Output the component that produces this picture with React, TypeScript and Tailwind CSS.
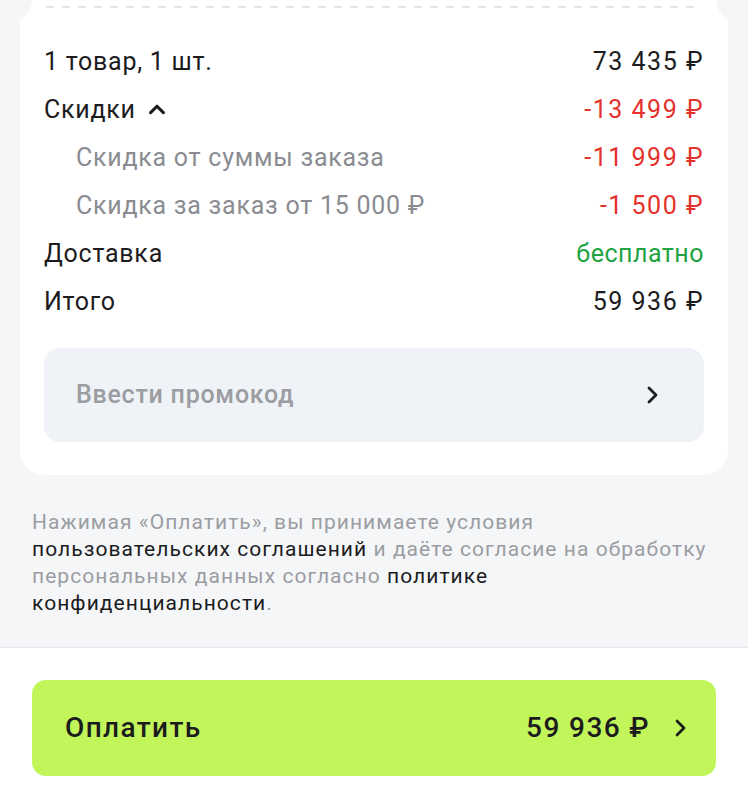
import React from "react";

const FONT = "font-['Roboto','Noto_Sans',sans-serif]";

function ChevronRight({ className = "" }: { className?: string }) {
  return (
    <svg viewBox="0 0 24 24" className={className} fill="none" stroke="currentColor" strokeWidth={2.8} strokeLinecap="round" strokeLinejoin="round">
      <path d="M9 5l7 7-7 7" />
    </svg>
  );
}

function ChevronUp({ className = "" }: { className?: string }) {
  return (
    <svg viewBox="0 0 24 24" className={className} fill="none" stroke="currentColor" strokeWidth={3.4} strokeLinecap="round" strokeLinejoin="round">
      <path d="M5 16l7-7 7 7" />
    </svg>
  );
}

function Row({
  label,
  value,
  sub = false,
  valueClass = "text-[#1c1c1e]",
  children,
}: {
  label: string;
  value: string;
  sub?: boolean;
  valueClass?: string;
  children?: React.ReactNode;
}) {
  return (
    <div className={`flex h-12 items-center justify-between ${sub ? "pl-8" : ""}`}>
      <span className={`flex items-center gap-[10px] ${sub ? "text-[#8a8c91]" : "text-[#1c1c1e]"}`}>
        {label}
        {children}
      </span>
      <span className={`tracking-[0.06em] ${valueClass}`}>{value}</span>
    </div>
  );
}

export default function App() {
  return (
    <div className={`${FONT} flex min-h-[800px] w-[748px] flex-col bg-[#f5f6f8]`}>
      <div className="px-5">
        <div className="relative rounded-b-[24px] bg-white px-6 pb-[33px] pt-[37px]">
          {/* ticket notches */}
          <div className="absolute -left-[34px] -top-[24px] h-[46px] w-[46px] rounded-full bg-[#f5f6f8]" />
          <div className="absolute -right-[34px] -top-[24px] h-[46px] w-[46px] rounded-full bg-[#f5f6f8]" />
          <svg className="absolute left-[26px] top-[6px] h-[2px] w-[656px]" viewBox="0 0 656 2" preserveAspectRatio="none">
            <line x1="0" y1="1" x2="656" y2="1" stroke="#d9dbe0" strokeWidth="1.5" strokeDasharray="8 8" />
          </svg>

          <div className="text-[25px] leading-none tracking-[0.03em]">
            <Row label="1 товар, 1 шт." value="73 435 ₽" />
            <Row label="Скидки" value="-13 499 ₽" valueClass="text-[#e5322d]">
              <ChevronUp className="h-[22px] w-[22px] text-[#1c1c1e]" />
            </Row>
            <Row label="Скидка от суммы заказа" value="-11 999 ₽" sub valueClass="text-[#e5322d]" />
            <Row label="Скидка за заказ от 15 000 ₽" value="-1 500 ₽" sub valueClass="text-[#e5322d]" />
            <Row label="Доставка" value="бесплатно" valueClass="text-[#20a342] !tracking-[0.02em]" />
            <Row label="Итого" value="59 936 ₽" />
          </div>

          <div className="mt-[23px] flex h-[94px] items-center justify-between rounded-[16px] bg-[#eff2f6] pl-8 pr-10">
            <span className="text-[25px] font-medium tracking-[0.03em] text-[#9b9da2]">Ввести промокод</span>
            <ChevronRight className="h-[24px] w-[24px] text-[#1c1c1e]" />
          </div>
        </div>
      </div>

      <p className="pl-8 pr-6 pt-[34px] text-[21px] leading-[27px] tracking-[0.05em] text-[#9b9da2]">
        Нажимая «Оплатить», вы принимаете условия{" "}
        <span className="text-[#1c1c1e]">пользовательских соглашений</span> и даёте согласие на обработку персональных данных согласно{" "}
        <span className="text-[#1c1c1e]">политике конфиденциальности</span>.
      </p>

      <div className="mt-[30px] flex-1 border-t border-[#e6e7ea] bg-white px-8 pt-[32px]">
        <button className="flex h-[96px] w-full items-center justify-between rounded-[14px] bg-[#c2f559] pl-[33px] pr-[24px] text-[28px] font-medium tracking-[0.05em] text-[#1c1c1e]">
          <span>Оплатить</span>
          <span className="flex items-center gap-[18px]">
            59 936 ₽
            <ChevronRight className="h-[24px] w-[24px]" />
          </span>
        </button>
      </div>
    </div>
  );
}
